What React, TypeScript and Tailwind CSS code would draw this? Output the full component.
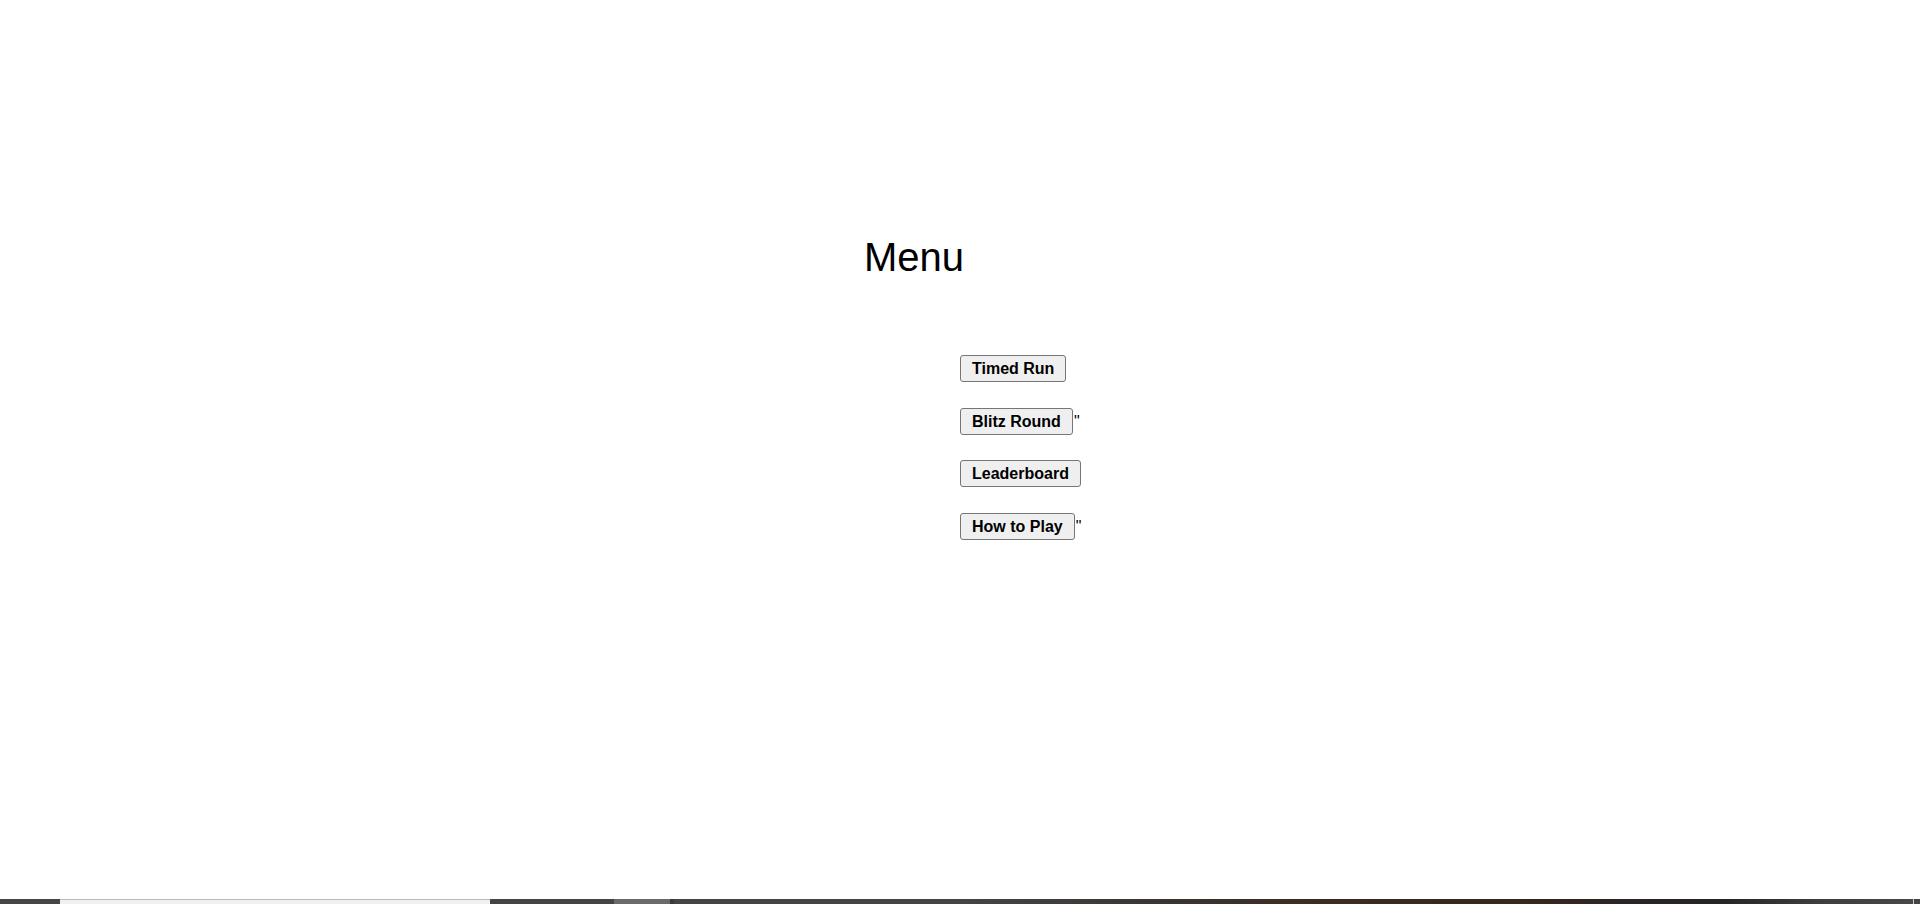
import React from "react";

const btn =
  "bg-[#efefef] border border-[#767676] rounded-[3px] px-[11px] py-[3px] text-[16px] leading-[19px] font-bold text-black";

export default function App() {
  return (
    <div
      className="relative w-[1920px] h-[904px] bg-white overflow-hidden"
      style={{ fontFamily: '"Liberation Sans", Arial, sans-serif' }}
    >
      <div className="flex justify-center pt-[234px]">
        <div className="w-[192px]">
          <h1 className="text-[40px] leading-[46px] font-normal text-black whitespace-nowrap">
            Menu
          </h1>
          <div className="pl-[96px] mt-[75px] flex flex-col gap-[25.7px] whitespace-nowrap">
            <div className="flex items-center">
              <button className={btn}>Timed Run</button>
            </div>
            <div className="flex items-center">
              <button className={btn}>Blitz Round</button>
              <span className="text-[16px] text-black leading-[19px] ml-[1px]">"</span>
            </div>
            <div className="flex items-center">
              <button className={btn}>Leaderboard</button>
            </div>
            <div className="flex items-center">
              <button className={btn}>How to Play</button>
              <span className="text-[16px] text-black leading-[19px] ml-[1px]">"</span>
            </div>
          </div>
        </div>
      </div>
      <div className="absolute left-0 bottom-0 w-full h-[5px] flex">
        <div className="w-[60px] bg-[#454545]" />
        <div className="w-[430px] bg-[#f0f0f0] border-t border-[#bbbbbb]" />
        <div className="w-[124px] bg-[#444444]" />
        <div className="w-[56px] bg-[#6a6a6a]" />
        <div className="w-[4px] bg-[#3a3a3a]" />
        <div className="w-[290px] bg-[#444444]" />
        <div className="flex-1 bg-[linear-gradient(90deg,#444444_0%,#3a3431_22%,#3b2b20_40%,#352820_60%,#2a2426_72%,#262427_80%,#3e3e3e_90%,#474747_100%)]" />
        <div className="w-[1px] bg-[#cccccc]" />
        <div className="w-[6px] bg-[#444444]" />
      </div>
    </div>
  );
}
